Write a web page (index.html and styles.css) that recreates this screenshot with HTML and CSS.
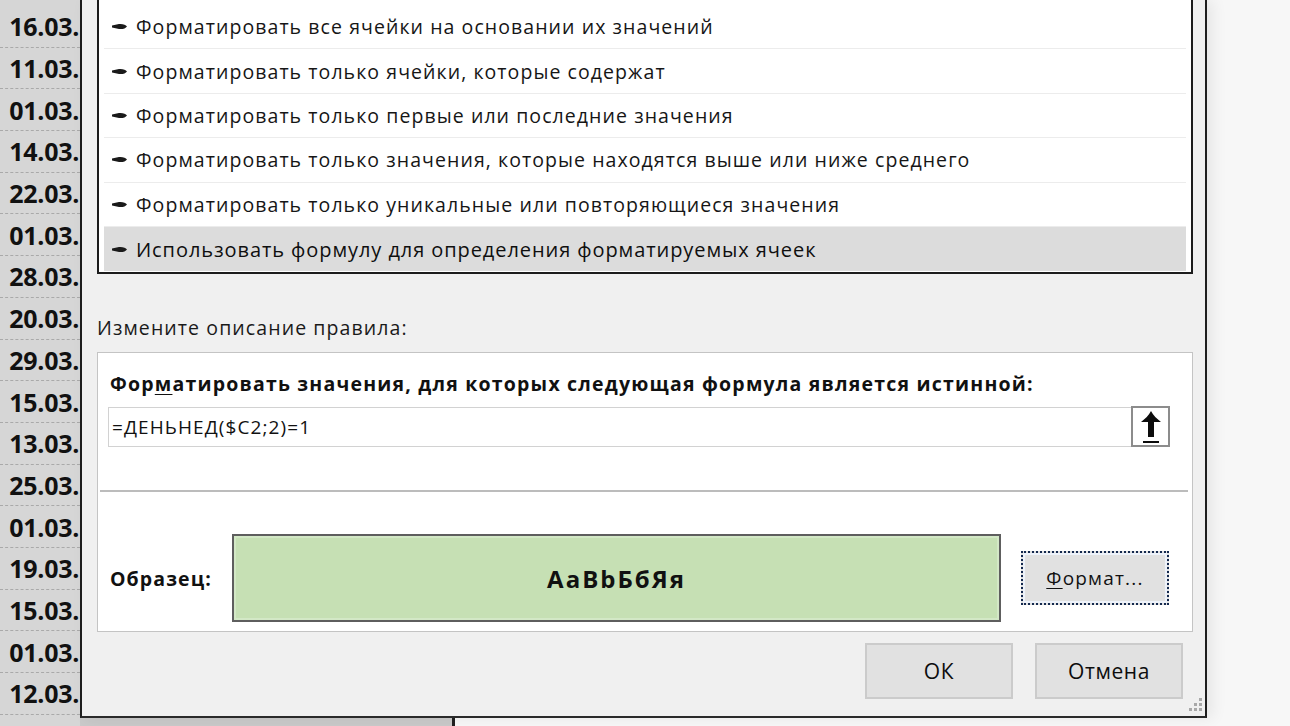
FILE: index.html
```html
<!DOCTYPE html>
<html lang="ru">
<head>
<meta charset="utf-8">
<title>Создание правила форматирования</title>
<link rel="stylesheet" href="styles.css">
</head>
<body>
<div class="screen">
  <div class="sheet">
    <div class="col-a">
      <div class="cell">16.03.</div>
      <div class="cell">11.03.</div>
      <div class="cell">01.03.</div>
      <div class="cell">14.03.</div>
      <div class="cell">22.03.</div>
      <div class="cell">01.03.</div>
      <div class="cell">28.03.</div>
      <div class="cell">20.03.</div>
      <div class="cell">29.03.</div>
      <div class="cell">15.03.</div>
      <div class="cell">13.03.</div>
      <div class="cell">25.03.</div>
      <div class="cell">01.03.</div>
      <div class="cell">19.03.</div>
      <div class="cell">15.03.</div>
      <div class="cell">01.03.</div>
      <div class="cell">12.03.</div>
    </div>
    <div class="col-b"></div>
    <div class="col-c"></div>
  </div>

  <div class="dialog">
    <div class="rule-list">
      <div class="rule"><svg class="mark" viewBox="0 0 15 7"><path d="M0 2.6 L7 1 Q13 0.6 15 3.5 Q13 6.4 7 6 L0 4.4 Z"/></svg>Форматировать все ячейки на основании их значений</div>
      <div class="rule"><svg class="mark" viewBox="0 0 15 7"><path d="M0 2.6 L7 1 Q13 0.6 15 3.5 Q13 6.4 7 6 L0 4.4 Z"/></svg>Форматировать только ячейки, которые содержат</div>
      <div class="rule"><svg class="mark" viewBox="0 0 15 7"><path d="M0 2.6 L7 1 Q13 0.6 15 3.5 Q13 6.4 7 6 L0 4.4 Z"/></svg>Форматировать только первые или последние значения</div>
      <div class="rule"><svg class="mark" viewBox="0 0 15 7"><path d="M0 2.6 L7 1 Q13 0.6 15 3.5 Q13 6.4 7 6 L0 4.4 Z"/></svg>Форматировать только значения, которые находятся выше или ниже среднего</div>
      <div class="rule"><svg class="mark" viewBox="0 0 15 7"><path d="M0 2.6 L7 1 Q13 0.6 15 3.5 Q13 6.4 7 6 L0 4.4 Z"/></svg>Форматировать только уникальные или повторяющиеся значения</div>
      <div class="rule selected"><svg class="mark" viewBox="0 0 15 7"><path d="M0 2.6 L7 1 Q13 0.6 15 3.5 Q13 6.4 7 6 L0 4.4 Z"/></svg>Использовать формулу для определения форматируемых ячеек</div>
    </div>

    <div class="section-label">Измените описание правила:</div>

    <div class="desc-box">
      <div class="desc-title">Фор<span class="ul">м</span>атировать значения, для которых следующая формула является истинной:</div>
      <div class="formula-row">
        <div class="formula-input">=ДЕНЬНЕД($C2;2)=1</div>
        <div class="collapse-btn">
          <svg viewBox="0 0 22 34" width="22" height="34"><path d="M11 1 C13 5 17 9 21 12 L14 12 L14 27 L8 27 L8 12 L1 12 C5 9 9 5 11 1 Z"/><rect x="3" y="31" width="16" height="2"/></svg>
        </div>
      </div>
      <div class="divider"></div>
      <div class="sample-row">
        <div class="sample-label">Образец:</div>
        <div class="sample-box"><span>AaBbБбЯя</span></div>
        <div class="format-btn"><span class="ul">Ф</span>ормат...</div>
      </div>
    </div>

    <div class="buttons">
      <div class="btn">ОК</div>
      <div class="btn">Отмена</div>
    </div>

    <svg class="grip" viewBox="0 0 16 16" width="16" height="16">
      <rect x="12" y="1" width="3" height="3"/>
      <rect x="7" y="6" width="3" height="3"/>
      <rect x="12" y="6" width="3" height="3"/>
      <rect x="2" y="11" width="3" height="3"/>
      <rect x="7" y="11" width="3" height="3"/>
      <rect x="12" y="11" width="3" height="3"/>
    </svg>
  </div>
</div>
</body>
</html>
```

FILE: styles.css
```css
* { box-sizing: border-box; }

html, body {
  margin: 0;
  padding: 0;
  width: 1290px;
  height: 726px;
  overflow: hidden;
  background: #f6f6f6;
}

body {
  font-family: "Open Sans", "Noto Sans", sans-serif;
  color: #151515;
}

.screen {
  position: relative;
  width: 1290px;
  height: 726px;
  overflow: hidden;
}

/* spreadsheet underneath */
.sheet {
  display: flex;
  height: 726px;
}

.col-a {
  width: 80px;
  background: #d6d6d6;
  padding-top: 6px;
  display: flex;
  flex-direction: column;
}

.cell {
  height: 41.7px;
  flex: none;
  display: flex;
  align-items: center;
  justify-content: flex-end;
  padding-right: 1px;
  font-family: "Open Sans", sans-serif;
  font-weight: 700;
  font-size: 25px;
  letter-spacing: -0.3px;
  color: #111;
  border-bottom: 1px dashed #a9a9a9;
  white-space: nowrap;
  overflow: hidden;
}

.col-b {
  width: 375px;
  background: #c9c9c9;
  border-right: 3px solid #202020;
}

.col-c {
  flex: 1;
  background: #f7f7f7;
}

/* dialog window */
.dialog {
  position: absolute;
  left: 80px;
  top: 0;
  width: 1127px;
  height: 718px;
  background: #f0f0f0;
  border-left: 2px solid #1e1e1e;
  border-right: 2px solid #1e1e1e;
  border-bottom: 2px solid #2a2a2a;
  padding: 0 12px 0 15px;
  display: flex;
  flex-direction: column;
  box-shadow: 6px 0 14px rgba(0, 0, 0, 0.07);
}

.rule-list {
  background: #fff;
  border: 2px solid #1c1c1c;
  border-top: none;
  padding: 5px 5px 1px 5px;
}

.rule {
  height: 44.4px;
  display: flex;
  align-items: center;
  padding-left: 8px;
  font-size: 19.5px;
  letter-spacing: 1.07px;
  color: #161616;
  border-bottom: 1px solid #ececec;
  white-space: nowrap;
}

.rule.selected {
  background: #dcdcdc;
  border-bottom: none;
  font-size: 20px;
  letter-spacing: 0.92px;
  color: #0f0f0f;
}

.mark {
  width: 15px;
  height: 7px;
  margin-right: 9px;
  flex: none;
  fill: #1a1a1a;
}

.section-label {
  margin-top: 42px;
  line-height: 24px;
  font-size: 19.5px;
  letter-spacing: 1.1px;
  color: #1a1a1a;
}

.desc-box {
  margin-top: 12px;
  height: 280px;
  background: #fff;
  border: 1px solid #c4c4c4;
  display: flex;
  flex-direction: column;
  padding-top: 19px;
}

.desc-title {
  line-height: 24px;
  padding-left: 12px;
  font-size: 19.5px;
  letter-spacing: 1.2px;
  font-weight: 700;
  color: #111;
  white-space: nowrap;
}

.ul {
  text-decoration: underline;
  text-underline-offset: 3px;
}

.formula-row {
  margin-top: 10px;
  margin-left: 10px;
  display: flex;
  align-items: center;
}

.formula-input {
  width: 1023px;
  height: 40px;
  border: 1px solid #d2d2d2;
  border-right: none;
  display: flex;
  align-items: center;
  padding-left: 3px;
  font-size: 19px;
  letter-spacing: 1.1px;
  color: #111;
}

.collapse-btn {
  width: 39px;
  height: 41px;
  border: 2px solid #8c8c8c;
  background: #fff;
  display: flex;
  align-items: center;
  justify-content: center;
}

.collapse-btn svg { fill: #0c0c0c; }

.divider {
  margin: 43px 4px 0 2px;
  height: 2px;
  background: #bcbcbc;
}

.sample-row {
  margin-top: 42px;
  display: flex;
  align-items: center;
  padding-left: 12px;
}

.sample-label {
  width: 122px;
  font-size: 19.5px;
  letter-spacing: 1.1px;
  font-weight: 700;
  color: #111;
}

.sample-box {
  width: 769px;
  height: 88px;
  border: 2px solid #5e5e5e;
  background: #c6e0b4;
  box-shadow: inset 0 0 0 2px #d3e8c6;
  display: flex;
  align-items: center;
  justify-content: center;
  font-size: 24px;
  letter-spacing: 2px;
  font-weight: 700;
  color: #111;
}

.format-btn {
  margin-left: 20px;
  width: 148px;
  height: 54px;
  background: #e1e1e1;
  border: 2px dotted #14294f;
  box-shadow: inset 0 0 0 2px #eef3fb;
  display: flex;
  align-items: center;
  justify-content: center;
  font-size: 19px;
  letter-spacing: 1.2px;
  color: #111;
}

.buttons {
  margin-top: 11px;
  display: flex;
  justify-content: flex-end;
  gap: 22px;
  padding-right: 10px;
}

.btn {
  width: 148px;
  height: 56px;
  background: #e1e1e1;
  border: 2px solid #cbcbcb;
  display: flex;
  align-items: center;
  justify-content: center;
  font-size: 21px;
  letter-spacing: 0.6px;
  font-weight: 500;
  color: #0d0d0d;
}

.grip {
  position: absolute;
  right: 2px;
  bottom: 3px;
  fill: #a8a8a8;
}
```
